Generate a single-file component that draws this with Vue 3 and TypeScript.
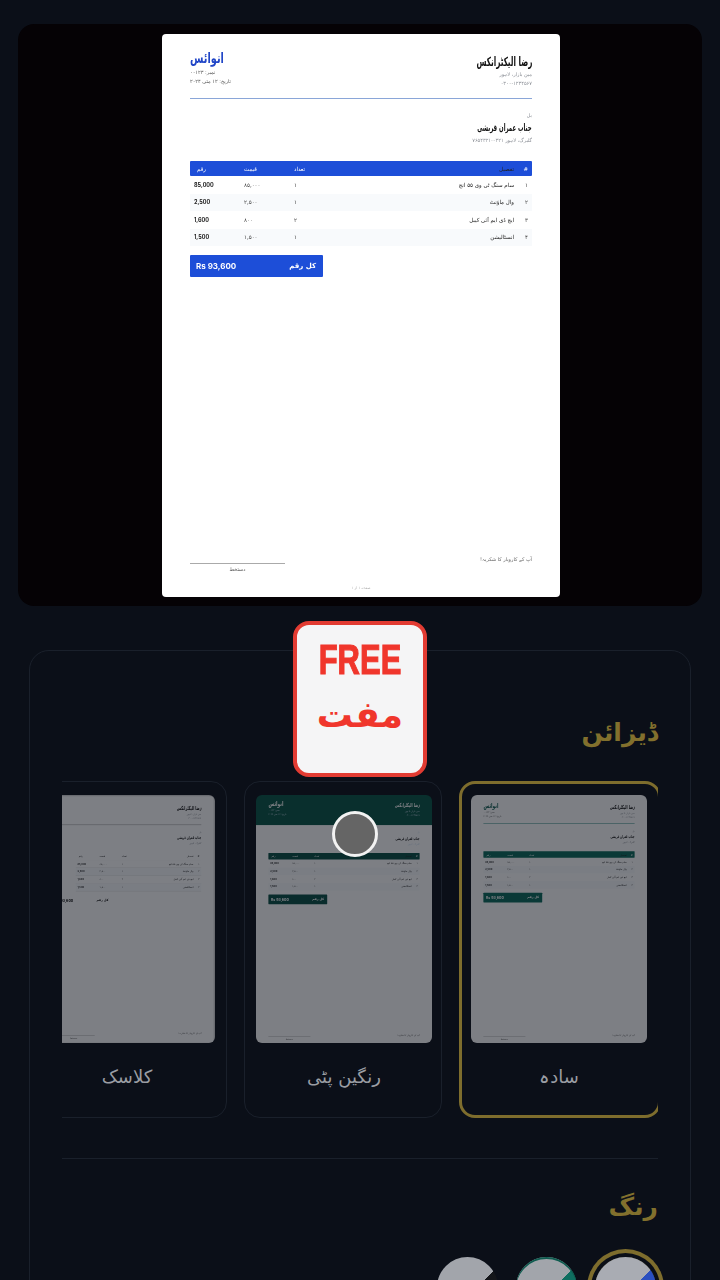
<script setup lang="ts">
interface Row { n: string; name: string; qty: string; price: string; total: string }
const rows: Row[] = [
  { n: '۱', name: 'سام سنگ ٹی وی ۵۵ انچ', qty: '۱', price: '۸۵,۰۰۰', total: '85,000' },
  { n: '۲', name: 'وال ماؤنٹ', qty: '۱', price: '۲,۵۰۰', total: '2,500' },
  { n: '۳', name: 'ایچ ڈی ایم آئی کیبل', qty: '۲', price: '۸۰۰', total: '1,600' },
  { n: '۴', name: 'انسٹالیشن', qty: '۱', price: '۱,۵۰۰', total: '1,500' },
]
interface Design { key: string; label: string; selected: boolean }
const designs: Design[] = [
  { key: 'plain', label: 'سادہ', selected: true },
  { key: 'band', label: 'رنگین پٹی', selected: false },
  { key: 'classic', label: 'کلاسک', selected: false },
]
const swatches = [
  { key: 'blue', selected: true },
  { key: 'teal', selected: false },
  { key: 'black', selected: false },
]
</script>

<template>
  <div class="page" dir="rtl">
    <div class="preview">
      <div class="paper main-paper">
        <div class="doc-head">
          <div class="biz">
            <div class="biz-name"><span class="sq-r">رضا الیکٹرانکس</span></div>
            <div class="tiny">مین بازار، لاہور</div>
            <div class="tiny">۰۳۰۰-۱۲۳۴۵۶۷</div>
          </div>
          <div class="inv">
            <div class="inv-title"><span class="sq-l">انوائس</span></div>
            <div class="tiny dark">نمبر: ۰۰۱۲۳</div>
            <div class="tiny dark">تاریخ: ۱۲ مئی ۲۰۲۴</div>
          </div>
        </div>
        <div class="bill">
          <div class="tiny">بل</div>
          <div class="cust"><span class="sq-r">جناب عمران قریشی</span></div>
          <div class="tiny">گلبرگ، لاہور ۰۳۲۱-۷۶۵۴۳۲۱</div>
        </div>
        <div class="table">
          <div class="tr th">
            <span class="c-n">#</span><span class="c-name">تفصیل</span><span class="c-q">تعداد</span><span class="c-p">قیمت</span><span class="c-t">رقم</span>
          </div>
          <div v-for="r in rows" :key="r.n" class="tr">
            <span class="c-n">{{ r.n }}</span><span class="c-name">{{ r.name }}</span><span class="c-q">{{ r.qty }}</span><span class="c-p">{{ r.price }}</span><span class="c-t num">{{ r.total }}</span>
          </div>
        </div>
        <div class="total-wrap">
          <div class="total"><span class="tl">کل رقم</span><span class="tv">Rs 93,600</span></div>
        </div>
        <div class="spacer"></div>
        <div class="doc-foot">
          <div class="thanks">آپ کے کاروبار کا شکریہ!</div>
          <div class="sign"><div class="sign-line"></div><div class="sign-label">دستخط</div></div>
        </div>
        <div class="pageno">صفحہ ۱ از ۱</div>
      </div>
    </div>

    <section class="panel">
      <div class="badge">
        <div class="badge-en" dir="ltr">FREE</div>
        <div class="badge-ur">مفت</div>
      </div>
      <h2 class="heading h-design">ڈیزائن</h2>
      <div class="strip">
        <div v-for="d in designs" :key="d.key" class="card" :class="[`card-${d.key}`, { selected: d.selected }]">
          <div class="thumb">
            <div class="paper mini" :class="d.key">
              <div class="doc-head">
                <div class="biz">
                  <div class="biz-name"><span class="sq-r">رضا الیکٹرانکس</span></div>
                  <div class="tiny">مین بازار، لاہور</div>
                  <div class="tiny">۰۳۰۰-۱۲۳۴۵۶۷</div>
                </div>
                <div v-if="d.key !== 'classic'" class="inv">
                  <div class="inv-title"><span class="sq-l">انوائس</span></div>
                  <div class="tiny dark">نمبر: ۰۰۱۲۳</div>
                  <div class="tiny dark">تاریخ: ۱۲ مئی ۲۰۲۴</div>
                </div>
              </div>
              <div class="bill">
                <div class="tiny">بل</div>
                <div class="cust"><span class="sq-r">جناب عمران قریشی</span></div>
                <div class="tiny">گلبرگ، لاہور</div>
              </div>
              <div class="table">
                <div class="tr th">
                  <span class="c-n">#</span><span class="c-name">تفصیل</span><span class="c-q">تعداد</span><span class="c-p">قیمت</span><span class="c-t">رقم</span>
                </div>
                <div v-for="r in rows" :key="r.n" class="tr">
                  <span class="c-n">{{ r.n }}</span><span class="c-name">{{ r.name }}</span><span class="c-q">{{ r.qty }}</span><span class="c-p">{{ r.price }}</span><span class="c-t num">{{ r.total }}</span>
                </div>
              </div>
              <div class="total-wrap">
                <div class="total"><span class="tl">کل رقم</span><span class="tv">Rs 93,600</span></div>
              </div>
              <div class="spacer"></div>
              <div class="doc-foot">
                <div class="thanks">آپ کے کاروبار کا شکریہ!</div>
                <div class="sign"><div class="sign-line"></div><div class="sign-label">دستخط</div></div>
              </div>
            </div>
          </div>
          <div class="card-label">{{ d.label }}</div>
        </div>
        <div class="touch"></div>
      </div>
      <div class="rule"></div>
      <h2 class="heading h-color">رنگ</h2>
      <div class="swatches">
        <div v-for="s in swatches" :key="s.key" class="swatch" :class="[s.key, { on: s.selected }]"></div>
      </div>
    </section>
  </div>
</template>

<style>
html, body { margin: 0; background: #0b0f18; }
</style>

<style scoped>
.page {
  width: 720px;
  height: 1280px;
  overflow: hidden;
  box-sizing: border-box;
  padding: 24px 18px 0;
  background: #0b0f18;
  font-family: "DejaVu Sans", "Noto Sans", sans-serif;
}
.preview {
  height: 582px;
  box-sizing: border-box;
  padding: 10px 0 0 2px;
  background: #050205;
  border-radius: 16px;
  display: flex;
  justify-content: center;
  align-items: flex-start;
}
.paper {
  width: 398px;
  height: 563px;
  box-sizing: border-box;
  padding: 14px 28px 6px;
  background: #fff;
  border-radius: 4px;
  display: flex;
  flex-direction: column;
  color: #111;
  filter: blur(0.45px);
}
.sq-r, .sq-l { display: inline-block; white-space: nowrap; }
.sq-r { transform-origin: right center; }
.sq-l { transform-origin: left center; transform: scaleX(0.65); }
.doc-head {
  display: flex;
  justify-content: space-between;
  align-items: flex-start;
  height: 50px;
  border-bottom: 1px solid #8aa6d8;
}
.biz-name { font-size: 12.5px; font-weight: 700; line-height: 16px; margin-top: 6px; }
.biz-name .sq-r { transform: scaleX(0.58); }
.inv { text-align: left; }
.inv-title { font-size: 15px; font-weight: 700; color: #2146c7; line-height: 20px; }
.tiny { font-size: 5px; line-height: 9px; color: #8b8f96; }
.tiny.dark { color: #555; }
.bill { margin-top: 12px; height: 50px; }
.cust { font-size: 10px; font-weight: 700; line-height: 16px; }
.cust .sq-r { transform: scaleX(0.54); }
.table { font-size: 5.5px; }
.tr {
  display: flex;
  align-items: center;
  height: 17.5px;
  padding: 0 4px;
  color: #444;
}
.tr:nth-child(odd):not(.th) { background: #f8fafc; }
.th {
  height: 15px;
  background: #1d4ed8;
  color: #fff;
  border-radius: 1px;
}
.c-n { width: 14px; }
.c-name { flex: 1; font-size: 5.5px; color: #222; }
.c-q { width: 54px; text-align: left; }
.c-p { width: 50px; text-align: left; }
.c-t { width: 50px; text-align: left; }
.th .c-t { padding-left: 3px; width: 47px; }
.num { font-weight: 700; color: #222; font-family: Inter, sans-serif; }
.total-wrap { display: flex; margin-top: 9px; }
.total {
  margin-right: auto;
  width: 133px;
  height: 22px;
  box-sizing: border-box;
  padding: 0 6px;
  background: #1d4ed8;
  color: #fff;
  border-radius: 1px;
  display: flex;
  align-items: center;
  justify-content: space-between;
}
.tl { font-size: 7px; font-weight: 700; padding-right: 1px; }
.tv { font-size: 8px; font-weight: 700; font-family: Inter, sans-serif; direction: ltr; }
.spacer { flex: 1; }
.doc-foot {
  display: flex;
  justify-content: space-between;
  align-items: flex-end;
}
.thanks { font-size: 5px; color: #666; padding-bottom: 12px; }
.sign { width: 95px; text-align: center; }
.sign-line { height: 1px; background: #aaa; }
.sign-label { font-size: 5px; line-height: 10px; color: #555; }
.pageno { text-align: center; font-size: 3.5px; line-height: 6px; color: #aaa; margin-top: 11px; }

.panel {
  position: relative;
  margin: 44px 11px 0;
  height: 700px;
  box-sizing: border-box;
  padding: 60px 32px 0;
  border: 1px solid #1a202b;
  border-radius: 20px;
}
.badge {
  position: absolute;
  top: -30px;
  left: 263px;
  width: 134px;
  height: 156px;
  box-sizing: border-box;
  border: 4px solid #e23b32;
  border-radius: 16px;
  background: #f5f5f6;
  color: #f0362c;
  text-align: center;
  z-index: 3;
}
.badge-en {
  font-family: "Liberation Sans", sans-serif;
  font-weight: 700;
  font-size: 43px;
  line-height: 40px;
  margin-top: 14px;
  transform: scaleX(0.72);
  -webkit-text-stroke: 1.2px #f0362c;
}
.badge-ur { font-size: 36px; font-weight: 700; line-height: 50px; margin-top: 11px; }
.heading {
  margin: 0;
  color: #82702d;
  font-size: 25px;
  font-weight: 700;
  line-height: 44px;
}
.strip {
  position: relative;
  display: flex;
  gap: 17px;
  margin-top: 26px;
  overflow: hidden;
}
.card {
  flex: 0 0 198px;
  height: 337px;
  box-sizing: border-box;
  padding: 13px 9px 0 11px;
  border: 1px solid #1a202b;
  border-radius: 16px;
}
.card-classic { padding-right: 11px; }
.card.selected {
  flex-basis: 202px;
  margin-right: -3px;
  border: 3px solid #7e6d2d;
  padding: 11px 11px 0 9px;
}
.thumb {
  width: 176px;
  height: 248px;
  overflow: hidden;
  border-radius: 6px;
  background: #0b0f18;
}
.mini {
  transform: scale(0.4422);
  transform-origin: top right;
  opacity: 0.47;
  filter: blur(0.9px);
  border-radius: 10px;
}
.plain .doc-head { border-bottom-color: #0f766e; }
.plain .inv-title { color: #0f5c50; }
.plain .th, .plain .total { background: #0b6a5b; }
.band .th, .band .total { background: #0a4f44; }
.band { padding-top: 0; }
.band .doc-head {
  margin: 0 -28px;
  padding: 10px 28px 0;
  height: 68px;
  box-sizing: border-box;
  background: #0a5546;
  border-bottom: 0;
  color: #fff;
}
.band .inv-title { color: #fff; }
.band .tiny { color: #cde; }
.band .bill { margin-top: 13px; }
.classic .doc-head { border-bottom-color: #888; }
.classic .table { padding-left: 52px; }
.classic .th { background: transparent; color: #222; }
.classic .tr { border-bottom: 1px solid #e4e4e4; height: 16.5px; }
.classic .total { background: transparent; color: #111; }
.classic { border: 3px solid #d4d4d4; }
.card-label {
  text-align: center;
  color: #9a9da3;
  font-size: 18px;
  line-height: 30px;
  margin-top: 19px;
}
.touch {
  position: absolute;
  left: 270px;
  top: 30px;
  width: 46px;
  height: 46px;
  box-sizing: border-box;
  border: 3.5px solid #f2f2f2;
  border-radius: 50%;
  background: #656565;
  z-index: 2;
}
.rule { height: 1px; background: #1a202b; margin-top: 40px; }
.h-color { margin-top: 26px; }
.swatches { display: flex; gap: 18px; margin-top: 28px; padding-right: 2px; }
.swatch { flex: 0 0 61px; height: 61px; border-radius: 50%; }
.swatch.on { box-shadow: 0 0 0 4px #0b0f18, 0 0 0 8px #7e6d2d; }
.swatch.blue { background: linear-gradient(135deg, #a9acb3 0 56%, #2a4fc0 56%); }
.swatch.teal {
  background: linear-gradient(135deg, #a2a5ab 0 56%, #0f6e60 56%);
  box-shadow: inset 0 2px 0 #0f5c50;
}
.swatch.black {
  background: linear-gradient(135deg, #a2a5ab 0 58%, #14161a 58% 68%, #a2a5ab 68%);
  clip-path: polygon(21% 0, 79% 0, 100% 33%, 100% 67%, 79% 100%, 21% 100%, 0 67%, 0 33%);
}
</style>
